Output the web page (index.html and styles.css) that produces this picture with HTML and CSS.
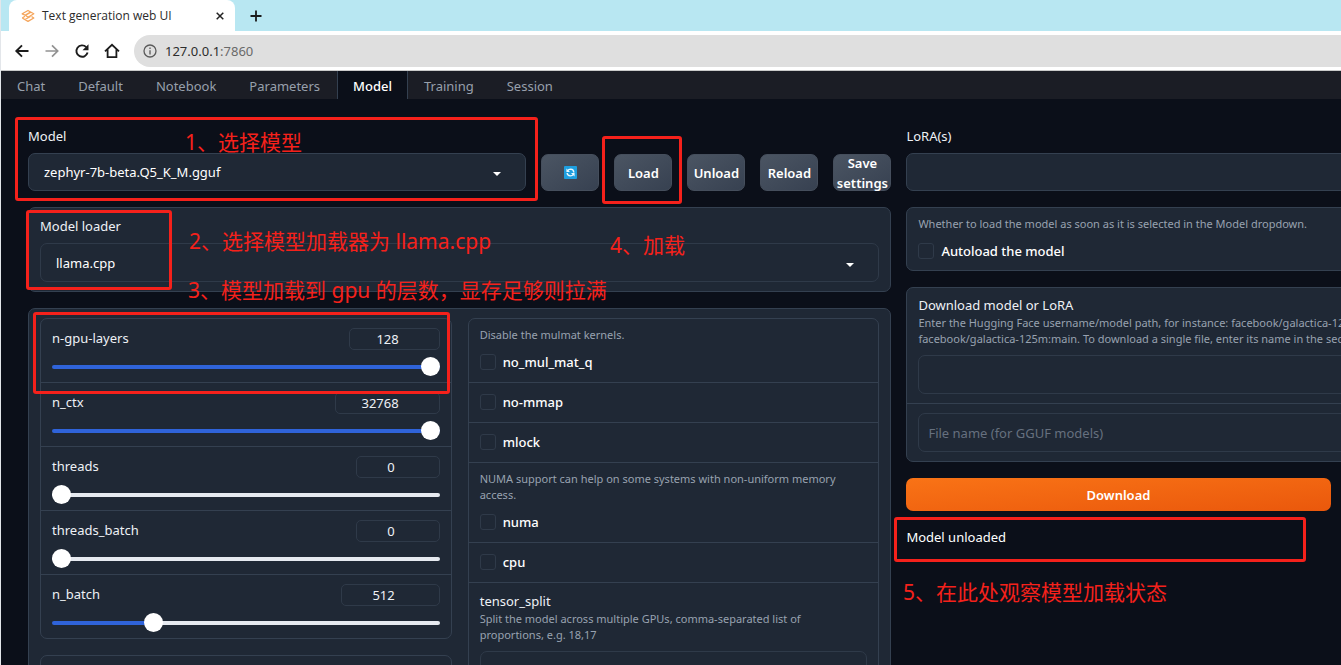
FILE: index.html
```html
<!DOCTYPE html>
<html lang="en">
<head>
<meta charset="utf-8">
<title>Text generation web UI</title>
<link rel="stylesheet" href="styles.css">
</head>
<body>
<div class="browser">
  <header class="chrome">
    <div class="tabstrip">
      <div class="browser-tab">
        <svg class="favicon" viewBox="0 0 14 14" fill="none" stroke="#f5a55c" stroke-width="1.300" stroke-linejoin="round"><path d="M1.200 4.800 7 1.500 9.500 3 4 6.200ZM4.500 6.300 10 3.200 12.800 4.800 7 8.200Z"/><path d="M1.200 9 4 7.300M1.200 9 7 12.400 12.800 9 10.500 7.500M4 10.500 9.500 7.500"/></svg>
        <span class="browser-tab-title">Text generation web UI</span>
        <button class="tab-close" aria-label="Close tab"><svg viewBox="0 0 8 8" stroke="#222" stroke-width="1.500"><path d="M.7.7 7.300 7.300M7.300.7.7 7.300"/></svg></button>
      </div>
      <button class="tab-new" aria-label="New tab"><svg viewBox="0 0 12 12" stroke="#1b1b1b" stroke-width="1.800"><path d="M6 .5V11.500M.5 6H11.500"/></svg></button>
    </div>
    <div class="toolbar">
      <button class="nav-button" aria-label="Back"><svg viewBox="0 0 16 16" fill="none" stroke="#1c1c1c" stroke-width="1.900"><path d="M14.500 8H2.500M8 2.300 2.300 8 8 13.700"/></svg></button>
      <button class="nav-button" aria-label="Forward"><svg viewBox="0 0 16 16" fill="none" stroke="#929292" stroke-width="1.700"><path d="M1.500 8H13.500M8 2.300 13.700 8 8 13.700"/></svg></button>
      <button class="nav-button" aria-label="Reload"><svg viewBox="0 0 16 16" fill="none" stroke="#1c1c1c" stroke-width="1.900"><path d="M13.600 9.600A5.700 5.700 0 1 1 12.200 4.100"/><path d="M14.500 1.200V7.200H8.500Z" fill="#1c1c1c" stroke="none"/></svg></button>
      <button class="nav-button" aria-label="Home"><svg viewBox="0 0 16 16" fill="none" stroke="#1c1c1c" stroke-width="1.800"><path d="M1 8.300 8 1.800 15 8.300M3.600 6.500V14.200H12.400V6.500"/></svg></button>
      <div class="address">
        <svg class="info-icon" viewBox="0 0 14 14" fill="none" stroke="#5a5a5a" stroke-width="1.300"><circle cx="7" cy="7" r="6"/><path d="M7 6.200V10.400M7 3.500V5"/></svg>
        <span class="url">127.0.0.1<span class="port">:7860</span></span>
      </div>
    </div>
  </header>

  <main class="app">
    <nav class="tabs">
      <button class="tab">Chat</button>
      <button class="tab">Default</button>
      <button class="tab">Notebook</button>
      <button class="tab">Parameters</button>
      <button class="tab tab-selected">Model</button>
      <button class="tab">Training</button>
      <button class="tab">Session</button>
    </nav>

    <div class="workspace">
      <section class="column">
        <div class="model-row">
          <div class="field">
            <label class="label" for="model">Model</label>
            <div class="select-wrap">
              <select id="model" class="control filled"><option>zephyr-7b-beta.Q5_K_M.gguf</option></select>
              <svg class="caret" viewBox="0 0 8 4"><path d="M0 0H8L4 4Z" fill="#fff"/></svg>
            </div>
          </div>
          <button class="button" aria-label="Refresh"><svg class="refresh" viewBox="0 0 14 14"><rect width="14" height="14" rx="1" fill="#1e9fe0"/><path d="M3.800 5.200Q5 3.400 7.200 3.400Q10.400 3.600 10.600 7M10.200 9Q9 10.600 6.800 10.600Q3.600 10.400 3.400 7.500" fill="none" stroke="#e8f8ff" stroke-width="1.500"/><path d="M2.600 2.600V6.500H6.500ZM11.400 11.400V7.500H7.500Z" fill="#e8f8ff"/></svg></button>
          <button class="button">Load</button>
          <button class="button">Unload</button>
          <button class="button">Reload</button>
          <button class="button">Save settings</button>
        </div>

        <div class="block">
          <label class="label" for="loader">Model loader</label>
          <div class="select-wrap">
            <select id="loader" class="control"><option>llama.cpp</option></select>
            <svg class="caret" viewBox="0 0 8 4"><path d="M0 0H8L4 4Z" fill="#fff"/></svg>
          </div>
        </div>

        <div class="block settings">
          <div class="stack">
            <div class="form">
              <div class="slider-row">
                <div class="slider-head"><label for="gpu">n-gpu-layers</label><input class="number n-128" type="number" value="128" aria-label="n-gpu-layers value"></div>
                <input id="gpu" class="slider" type="range" min="0" max="128" value="128" style="--fill:100%">
              </div>
              <div class="slider-row">
                <div class="slider-head"><label for="ctx">n_ctx</label><input class="number n-32768" type="number" value="32768" aria-label="n_ctx value"></div>
                <input id="ctx" class="slider" type="range" min="0" max="32768" value="32768" style="--fill:100%">
              </div>
              <div class="slider-row">
                <div class="slider-head"><label for="threads">threads</label><input class="number n-32" type="number" value="0" aria-label="threads value"></div>
                <input id="threads" class="slider" type="range" min="0" max="32" value="0" style="--fill:0%">
              </div>
              <div class="slider-row">
                <div class="slider-head"><label for="tbatch">threads_batch</label><input class="number n-32" type="number" value="0" aria-label="threads_batch value"></div>
                <input id="tbatch" class="slider" type="range" min="0" max="32" value="0" style="--fill:0%">
              </div>
              <div class="slider-row">
                <div class="slider-head"><label for="nbatch">n_batch</label><input class="number n-2048" type="number" value="512" aria-label="n_batch value"></div>
                <input id="nbatch" class="slider" type="range" min="0" max="2048" value="512" style="--fill:25%">
              </div>
            </div>
            <div class="form form-next"></div>
          </div>

          <div class="form">
            <div class="check-row">
              <p class="info">Disable the mulmat kernels.</p>
              <label class="check"><input type="checkbox">no_mul_mat_q</label>
            </div>
            <div class="check-row"><label class="check"><input type="checkbox">no-mmap</label></div>
            <div class="check-row"><label class="check"><input type="checkbox">mlock</label></div>
            <div class="check-row">
              <p class="info">NUMA support can help on some systems with non-uniform memory access.</p>
              <label class="check"><input type="checkbox">numa</label>
            </div>
            <div class="check-row"><label class="check"><input type="checkbox">cpu</label></div>
            <div class="check-row">
              <label class="title" for="split">tensor_split</label>
              <p class="info">Split the model across multiple GPUs, comma-separated list of proportions, e.g. 18,17</p>
              <input id="split" class="control" type="text">
            </div>
          </div>
        </div>
      </section>

      <section class="column">
        <div class="field">
          <label class="label" for="lora">LoRA(s)</label>
          <input id="lora" class="control filled" type="text">
        </div>
        <div class="block autoload">
          <p class="info">Whether to load the model as soon as it is selected in the Model dropdown.</p>
          <label class="check"><input type="checkbox">Autoload the model</label>
        </div>
        <div class="block download">
          <div class="download-part">
            <label class="title" for="repo">Download model or LoRA</label>
            <p class="info">Enter the Hugging Face username/model path, for instance: facebook/galactica-125m. To specify a branch, add it at the end after a ":" character like this: facebook/galactica-125m:main. To download a single file, enter its name in the second box.</p>
            <input id="repo" class="control" type="text">
          </div>
          <div class="download-part">
            <input class="control" type="text" placeholder="File name (for GGUF models)" aria-label="File name">
          </div>
        </div>
        <div class="download-actions">
          <button class="button primary">Download</button>
        </div>
        <p class="status">Model unloaded</p>
      </section>
    </div>
  </main>

  <div class="mark mark-model"></div>
  <div class="mark mark-loader"></div>
  <div class="mark mark-layers"></div>
  <div class="mark mark-load"></div>
  <div class="mark mark-status"></div>
  <p class="note note-model">1、选择模型</p>
  <p class="note note-loader">2、选择模型加载器为 llama.cpp</p>
  <p class="note note-layers">3、模型加载到 gpu 的层数，显存足够则拉满</p>
  <p class="note note-load">4、加载</p>
  <p class="note note-status">5、在此处观察模型加载状态</p>
</div>
</body>
</html>
```
FILE: styles.css
```css
:root {
  --bg: #0b0f19;
  --panel: #1f2835;
  --line: #344050;
  --line-soft: #2f3a49;
  --text: #eef1f5;
  --muted: #98a2b0;
  --red: #f5211b;
}
* { box-sizing: border-box; }
body {
  margin: 0;
  font: 13px/20px "Noto Sans", "Noto Sans CJK SC", sans-serif;
  color: var(--text);
  background: var(--bg);
}
p { margin: 0; }
button, input, select { font: inherit; color: inherit; margin: 0; }
button { border: 0; padding: 0; background: none; }
svg { display: block; }

.browser {
  position: relative;
  height: 100vh;
  overflow: hidden;
  border-left: 1px solid #e3e6ea;
}

/* Browser chrome */
.chrome { background: #fff; border-bottom: 1px solid #c9c9c9; }
.tabstrip { display: flex; height: 31px; background: #b8e7f2; }
.browser-tab {
  display: flex;
  align-items: center;
  width: 226px;
  margin-left: 8px;
  padding: 0 11px 0 12px;
  background: #fff;
  border-radius: 8px 8px 0 0;
}
.favicon { width: 14px; height: 14px; }
.browser-tab-title {
  flex: 1;
  margin-left: 7px;
  font: 12px/20px "Open Sans", sans-serif;
  color: #2b2b2b;
}
.tab-close svg { width: 8px; height: 8px; }
.tab-new { margin-left: 15px; }
.tab-new svg { width: 12px; height: 12px; }
.toolbar { display: flex; align-items: center; gap: 14px; height: 39px; padding-left: 13px; }
.nav-button svg { width: 16px; height: 16px; }
.address {
  flex: 1;
  display: flex;
  align-items: center;
  gap: 8px;
  height: 32px;
  padding-left: 9px;
  border-radius: 16px 0 0 16px;
  background: #dfdfdf;
}
.info-icon { width: 14px; height: 14px; }
.url { font-size: 13px; color: #2d2d2d; }
.port { color: #6a6a6a; }

/* App tabs */
.tabs { display: flex; height: 28px; background: #1b1d25; }
.tab { padding: 2px 16px 0; color: #98a0ac; border: solid transparent; border-width: 0 1px 0 0; }
.tab-selected {
  padding: 2px 15px 0;
  color: #fff;
  font-weight: 500;
  background: var(--bg);
  border-color: var(--line);
  border-width: 0 1px;
}

/* Layout: two equal columns on a canvas wider than the window */
.workspace {
  display: grid;
  grid-template-columns: 1fr 1fr;
  align-items: start;
  gap: 15px;
  width: 132%;
  padding: 27px 0 0 27px;
}
.column { display: flex; flex-direction: column; gap: 16px; min-width: 0; }
.label { display: block; margin-bottom: 7px; }
.title { display: block; }

.control {
  display: block;
  width: 100%;
  height: 39px;
  padding: 0 15px;
  border: 1px solid var(--line-soft);
  border-radius: 7px;
  background: transparent;
  appearance: none;
  outline: none;
  color: #fff;
}
.control::placeholder { color: #66707f; }
input.control { padding: 0 9px; }
.filled { height: 38px; border-color: var(--line); background: var(--panel); }
.select-wrap { position: relative; }
.caret { position: absolute; right: 25px; top: 50%; width: 8px; height: 4px; }

.model-row { display: grid; grid-template-columns: 1fr repeat(5, 58px); align-items: end; gap: 15px; }
.button {
  display: flex;
  align-items: center;
  justify-content: center;
  height: 37px;
  border-radius: 7px;
  border: 1px solid #454e5c;
  background: linear-gradient(to bottom right, #4b5563, #374151);
  color: #fff;
  font-weight: 600;
}
.refresh { width: 13px; height: 13px; }

.block {
  padding: 8px 11px 9px;
  border: 1px solid var(--line);
  border-radius: 7px;
  background: var(--panel);
}
.settings { display: grid; grid-template-columns: 1fr 1fr; align-items: start; gap: 16px; padding: 9px 11px; }
.stack { display: flex; flex-direction: column; gap: 16px; }
.form { border: 1px solid var(--line); border-radius: 7px; }
.form-next { height: 64px; }

.slider-row { padding: 9px 11px 6px; }
.slider-row + .slider-row, .check-row + .check-row { border-top: 1px solid var(--line); }
.slider-head { display: flex; justify-content: space-between; height: 22px; }
.number {
  height: 22px;
  padding: 0 40px 0 0;
  border: 1px solid var(--line-soft);
  border-radius: 5px;
  background: transparent;
  text-align: right;
  appearance: textfield;
  outline: none;
}
.number::-webkit-inner-spin-button { display: none; }
.n-128 { width: 91px; }
.n-32768 { width: 105px; }
.n-32 { width: 84px; padding-right: 44px; }
.n-2048 { width: 99px; padding-right: 44px; }

.slider {
  display: block;
  width: 100%;
  height: 19px;
  margin-top: 7px;
  background: transparent;
  appearance: none;
}
.slider::-webkit-slider-runnable-track {
  height: 4px;
  border-radius: 2px;
  background: linear-gradient(#2f63d9, #2f63d9) 0 0 / var(--fill) 100% no-repeat #e6eaf0;
}
.slider::-webkit-slider-thumb {
  width: 19px;
  height: 19px;
  margin-top: -8px;
  border-radius: 50%;
  background: #fff;
  appearance: none;
}

.check-row { padding: 8px 11px 10px; }
.info { margin-bottom: 8px; font-size: 11px; line-height: 16px; color: var(--muted); }
.check { display: flex; align-items: center; gap: 7px; min-height: 21px; color: #fff; font-weight: 500; }
.check input {
  width: 16px;
  height: 16px;
  border: 1px solid var(--line-soft);
  border-radius: 3px;
  appearance: none;
}
.download { padding: 0; }
.download-part { padding: 9px 11px; }
.download-part:first-child { padding-top: 7px; }
.download-part + .download-part { border-top: 1px solid var(--line); }
.download-actions { display: grid; grid-template-columns: 1fr 1fr; gap: 15px; }
.primary { height: 33px; border: 0; background: linear-gradient(to bottom right, #f97316, #ea580c); }
.status { color: #fff; }

/* Annotations drawn over the page */
.mark { position: absolute; border: 3px solid var(--red); border-radius: 3px; }
.mark-model { left: 14px; top: 117px; width: 523px; height: 84px; }
.mark-loader { left: 25px; top: 210px; width: 146px; height: 80px; }
.mark-layers { left: 32px; top: 312px; width: 417px; height: 82px; }
.mark-load { left: 601px; top: 136px; width: 80px; height: 68px; }
.mark-status { left: 893px; top: 517px; width: 412px; height: 45px; }
.note { position: absolute; font-size: 21px; line-height: 28px; color: var(--red); white-space: nowrap; }
.note-model { left: 184px; top: 128px; }
.note-loader { left: 188px; top: 227px; }
.note-layers { left: 187px; top: 276px; }
.note-load { left: 609px; top: 231px; }
.note-status { left: 902px; top: 578px; }
```
